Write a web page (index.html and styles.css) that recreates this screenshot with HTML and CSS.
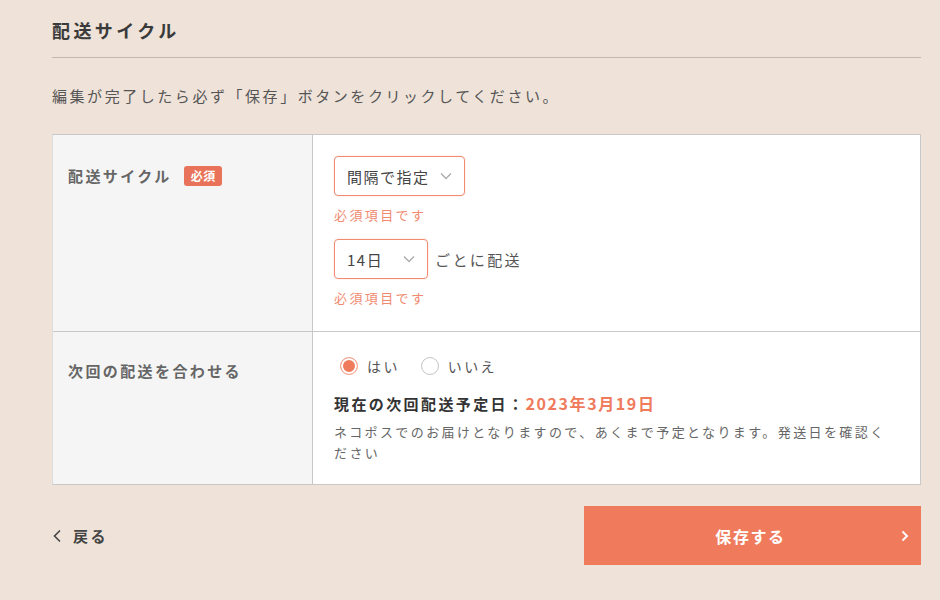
FILE: index.html
```html
<!DOCTYPE html>
<html lang="ja">
<head>
    <meta charset="UTF-8">
    <meta name="viewport" content="width=device-width, initial-scale=1.0">
    <title>配送サイクル</title>
    <link rel="stylesheet" href="styles.css">
</head>
<body>
    <div class="container">
        <h1 class="page-title">配送サイクル</h1>
        <p class="lead">編集が完了したら必ず「保存」ボタンをクリックしてください。</p>

        <div class="form-table">
            <div class="form-label">
                <span>配送サイクル</span>
                <span class="required">必須</span>
            </div>
            <div class="form-field">
                <div class="select select-wide">
                    <span>間隔で指定</span>
                    <svg class="chevron" width="12" height="8" viewBox="0 0 12 8"><path d="M1 1.5l5 5 5-5" fill="none" stroke="#aaa" stroke-width="1.3"/></svg>
                </div>
                <p class="error">必須項目です</p>
                <div class="inline-row">
                    <div class="select select-narrow">
                        <span>14日</span>
                        <svg class="chevron" width="12" height="8" viewBox="0 0 12 8"><path d="M1 1.5l5 5 5-5" fill="none" stroke="#aaa" stroke-width="1.3"/></svg>
                    </div>
                    <span class="suffix">ごとに配送</span>
                </div>
                <p class="error">必須項目です</p>
            </div>

            <div class="form-label label-second">
                <span>次回の配送を合わせる</span>
            </div>
            <div class="form-field field-second">
                <div class="radios">
                    <label class="radio"><span class="radio-dot checked"></span>はい</label>
                    <label class="radio"><span class="radio-dot"></span>いいえ</label>
                </div>
                <p class="next-date">現在の次回配送予定日：<span class="date">2023年3月19日</span></p>
                <p class="note">ネコポスでのお届けとなりますので、あくまで予定となります。発送日を確認ください</p>
            </div>
        </div>

        <div class="actions">
            <a class="back-link" href="#">
                <svg width="10" height="14" viewBox="0 0 10 14"><path d="M8 1.5L2.5 7 8 12.5" fill="none" stroke="#444" stroke-width="1.6"/></svg>
                戻る
            </a>
            <button class="save-btn">
                保存する
                <svg class="save-arrow" width="8" height="12" viewBox="0 0 8 12"><path d="M1.5 1.5L6 6l-4.5 4.5" fill="none" stroke="#fff" stroke-width="2"/></svg>
            </button>
        </div>
    </div>
</body>
</html>
```

FILE: styles.css
```css
body {
    margin: 0;
    background: #eee2d9;
    font-family: "Noto Sans CJK JP", "Noto Sans", sans-serif;
    color: #333;
    letter-spacing: 0.15em;
}
.container {
    width: 869px;
    margin-left: 52px;
    padding-top: 16px;
}
p {
    margin: 0;
}
.page-title {
    margin: 0;
    font-size: 18px;
    line-height: 28px;
    font-weight: bold;
    color: #3a3a3a;
    letter-spacing: 0.19em;
    padding-bottom: 13px;
    border-bottom: 1px solid #c3b8b0;
}
.lead {
    margin-top: 26px;
    font-size: 15px;
    line-height: 24px;
    color: #555;
    letter-spacing: 0.17em;
}
.form-table {
    margin-top: 26px;
    display: grid;
    grid-template-columns: 260px 1fr;
    border: 1px solid #c8c8c8;
    border-left-color: #ddd;
}
.form-label {
    background: #f5f5f5;
    border-right: 1px solid #c8c8c8;
    padding: 30px 16px 0 15px;
    font-size: 15px;
    line-height: 22px;
    font-weight: bold;
    color: #666;
    display: flex;
    align-items: flex-start;
    gap: 12px;
}
.required {
    background: #e8735a;
    color: #fff;
    font-size: 12px;
    line-height: 20px;
    padding: 0 6px 0 7px;
    border-radius: 3px;
    letter-spacing: 0.05em;
    margin-top: 1px;
}
.form-field {
    background: #fff;
    padding: 21px 20px 23px 21px;
}
.label-second,
.field-second {
    border-top: 1px solid #c8c8c8;
}
.label-second {
    padding-top: 28px;
}
.select {
    height: 40px;
    box-sizing: border-box;
    border: 1px solid #f08a70;
    border-radius: 4px;
    display: flex;
    align-items: center;
    justify-content: space-between;
    padding: 0 12px 0 12px;
    font-size: 15px;
    color: #444;
    letter-spacing: 0.1em;
    box-shadow: 0 0 2px rgba(240, 138, 112, 0.35);
}
.select-wide {
    width: 131px;
}
.select-narrow {
    width: 94px;
}
.inline-row {
    margin-top: 14px;
    display: flex;
    align-items: center;
    gap: 7px;
}
.suffix {
    font-size: 15px;
    color: #555;
}
.error {
    margin-top: 9px;
    font-size: 13px;
    line-height: 20px;
    color: #f08a70;
}
.field-second {
    padding-top: 23px;
    padding-bottom: 21px;
}
.radios {
    display: flex;
    gap: 21px;
    font-size: 14px;
    line-height: 22px;
    color: #555;
}
.radio {
    display: flex;
    align-items: center;
    gap: 9px;
}
.radio:first-child {
    margin-left: 6px;
}
.radio-dot {
    width: 18px;
    height: 18px;
    box-sizing: border-box;
    border-radius: 50%;
    border: 1px solid #c4c4c4;
    background: #fff;
}
.radio-dot.checked {
    border-color: #f5a893;
    background: #ef7a5c;
    box-shadow: inset 0 0 0 2px #fff;
}
.next-date {
    margin-top: 15px;
    font-size: 15px;
    line-height: 22px;
    font-weight: bold;
    color: #333;
}
.date {
    color: #ef7a5c;
    font-size: 16px;
    letter-spacing: 0.1em;
}
.note {
    margin-top: 6px;
    font-size: 13px;
    line-height: 21px;
    color: #666;
}
.actions {
    margin-top: 21px;
    display: flex;
    justify-content: space-between;
    align-items: center;
}
.back-link {
    display: flex;
    align-items: center;
    gap: 11px;
    font-size: 15px;
    font-weight: bold;
    color: #444;
    text-decoration: none;
}
.save-btn {
    position: relative;
    width: 337px;
    height: 59px;
    border: none;
    background: #ef7a5c;
    color: #fff;
    font-family: inherit;
    font-size: 16px;
    font-weight: bold;
    letter-spacing: 0.1em;
    padding-right: 10px;
    cursor: pointer;
}
.save-arrow {
    position: absolute;
    right: 12px;
    top: 24px;
}
```
